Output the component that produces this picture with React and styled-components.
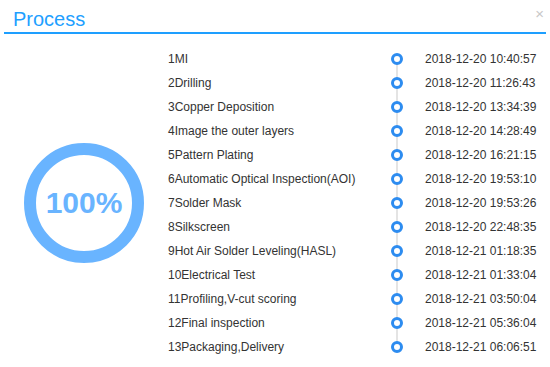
import React from 'react';
import styled, { createGlobalStyle } from 'styled-components';

const GlobalStyle = createGlobalStyle`
  html, body {
    margin: 0;
    padding: 0;
    background: #fff;
    font-family: "Liberation Sans", Arial, sans-serif;
  }
`;

const steps = [
  ['1MI', '2018-12-20 10:40:57'],
  ['2Drilling', '2018-12-20 11:26:43'],
  ['3Copper Deposition', '2018-12-20 13:34:39'],
  ['4Image the outer layers', '2018-12-20 14:28:49'],
  ['5Pattern Plating', '2018-12-20 16:21:15'],
  ['6Automatic Optical Inspection(AOI)', '2018-12-20 19:53:10'],
  ['7Solder Mask', '2018-12-20 19:53:26'],
  ['8Silkscreen', '2018-12-20 22:48:35'],
  ['9Hot Air Solder Leveling(HASL)', '2018-12-21 01:18:35'],
  ['10Electrical Test', '2018-12-21 01:33:04'],
  ['11Profiling,V-cut scoring', '2018-12-21 03:50:04'],
  ['12Final inspection', '2018-12-21 05:36:04'],
  ['13Packaging,Delivery', '2018-12-21 06:06:51'],
];

const Dialog = styled.div`
  position: relative;
  width: 550px;
  height: 367px;
  background: #fff;
`;

const Header = styled.div`
  margin: 0 4px;
  height: 32px;
  padding-left: 9px;
  border-bottom: 2px solid #1e9fff;
  display: flex;
  align-items: center;
`;

const Title = styled.h2`
  margin: 0;
  font-size: 20px;
  font-weight: normal;
  color: #1e9fff;
  line-height: 1;
  padding-top: 5px;
`;

const Close = styled.span`
  position: absolute;
  top: 6px;
  right: 6px;
  font-size: 15px;
  color: #c8c8c8;
  line-height: 1;
`;

const Body = styled.div`
  display: flex;
  padding-top: 13px;
`;

const RingCol = styled.div`
  width: 168px;
  display: flex;
  align-items: center;
  justify-content: center;
`;

const Ring = styled.div`
  width: 96px;
  height: 96px;
  border: 12px solid #69b4ff;
  border-radius: 50%;
  display: flex;
  align-items: center;
  justify-content: center;
  color: #69b4ff;
  font-size: 30px;
  font-weight: bold;
`;

const List = styled.div`
  display: flex;
  flex-direction: column;
`;

const Row = styled.div`
  display: grid;
  grid-template-columns: 223px 12px 22px auto;
  height: 24px;
  align-items: center;
  font-size: 12px;
  color: #333;
`;

const DotCell = styled.div`
  position: relative;
  height: 24px;
  display: flex;
  align-items: center;
  justify-content: center;

  &::before {
    content: '';
    position: absolute;
    left: 5px;
    width: 2px;
    top: ${p => (p.$first ? '12px' : '0')};
    bottom: ${p => (p.$last ? '12px' : '0')};
    background: #e4e4e4;
  }
`;

const Dot = styled.span`
  position: relative;
  width: 6px;
  height: 6px;
  border: 3px solid #2d8cf0;
  border-radius: 50%;
  background: #fff;
`;

export default function App() {
  return (
    <>
      <GlobalStyle />
      <Dialog>
        <Header>
          <Title>Process</Title>
        </Header>
        <Close>×</Close>
        <Body>
          <RingCol>
            <Ring>100%</Ring>
          </RingCol>
          <List>
            {steps.map(([name, time], i) => (
              <Row key={name}>
                <span>{name}</span>
                <DotCell $first={i === 0} $last={i === steps.length - 1}>
                  <Dot />
                </DotCell>
                <span />
                <span>{time}</span>
              </Row>
            ))}
          </List>
        </Body>
      </Dialog>
    </>
  );
}
